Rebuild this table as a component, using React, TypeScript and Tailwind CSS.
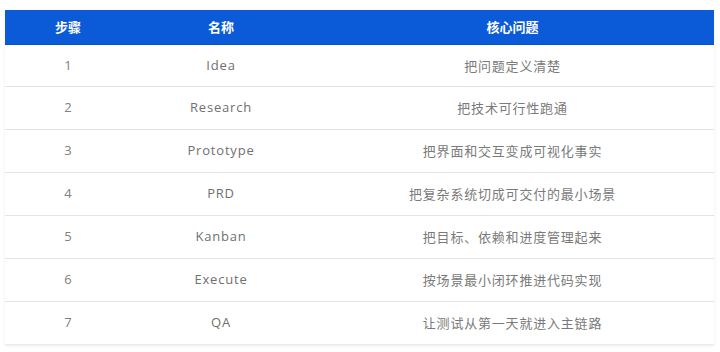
import React from "react";

const rows = [
  ["1", "Idea", "把问题定义清楚"],
  ["2", "Research", "把技术可行性跑通"],
  ["3", "Prototype", "把界面和交互变成可视化事实"],
  ["4", "PRD", "把复杂系统切成可交付的最小场景"],
  ["5", "Kanban", "把目标、依赖和进度管理起来"],
  ["6", "Execute", "按场景最小闭环推进代码实现"],
  ["7", "QA", "让测试从第一天就进入主链路"],
];

export default function App() {
  return (
    <div className="w-[720px] h-[352px] bg-white pt-[10px] px-[5px] overflow-hidden" style={{ fontFamily: '"Open Sans", "Noto Sans CJK SC", sans-serif' }}>
      <div className="w-[709px] shadow-[0_1px_3px_rgba(0,0,0,0.08)]">
        <div className="grid grid-cols-[126px_180px_1fr] h-[35px] bg-[#0b5bd8] border-b border-[#0a52c4] text-white text-[13px] font-bold items-center" style={{ fontFamily: '"Noto Sans CJK SC", sans-serif' }}>
          <div className="text-center">步骤</div>
          <div className="text-center">名称</div>
          <div className="text-center">核心问题</div>
        </div>
        {rows.map((r, i) => (
          <div key={i} className={`grid grid-cols-[126px_180px_1fr] items-center text-[13px] text-[#707070] ${i === 0 ? "h-[42px]" : "h-[43px]"} ${i === rows.length - 1 ? "border-b border-[#ececec]" : "border-b border-[#e3e3e3]"}`}>
            <div className="text-center text-[#808080]">{r[0]}</div>
            <div className="text-center tracking-[0.8px]">{r[1]}</div>
            <div className="text-center tracking-[0.8px] text-[#7a7a7a]" style={{ fontFamily: '"Noto Sans CJK SC", sans-serif' }}>{r[2]}</div>
          </div>
        ))}
      </div>
    </div>
  );
}
